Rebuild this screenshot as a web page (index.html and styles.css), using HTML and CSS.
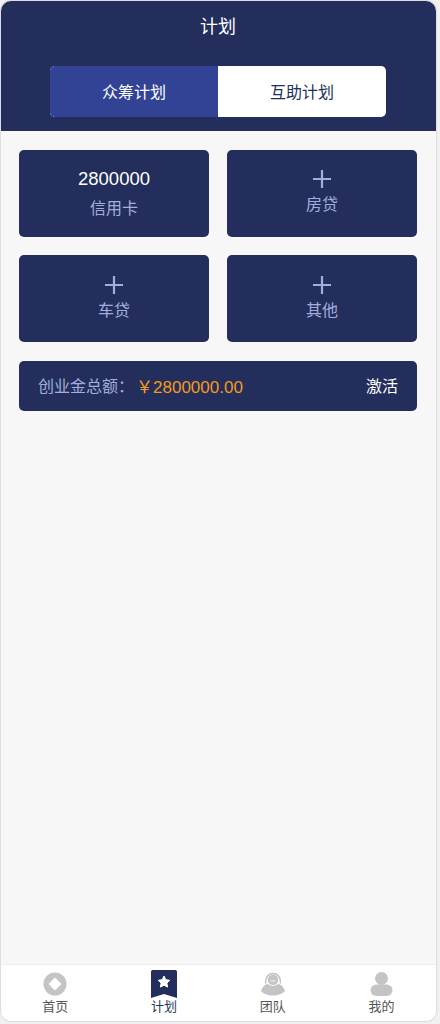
FILE: index.html
```html
<!DOCTYPE html>
<html lang="zh">
<head>
<meta charset="utf-8">
<title>计划</title>
<link rel="stylesheet" href="styles.css">
</head>
<body>
<div class="app">
  <header class="top">
    <h1 class="title">计划</h1>
    <div class="tabs">
      <div class="tab active">众筹计划</div>
      <div class="tab">互助计划</div>
    </div>
  </header>
  <main class="main">
    <div class="grid">
      <div class="card">
        <div class="amount">2800000</div>
        <div class="label label-amount">信用卡</div>
      </div>
      <div class="card">
        <svg class="plus" viewBox="0 0 18 18"><path d="M9 0v18M0 9h18"/></svg>
        <div class="label">房贷</div>
      </div>
      <div class="card">
        <svg class="plus" viewBox="0 0 18 18"><path d="M9 0v18M0 9h18"/></svg>
        <div class="label">车贷</div>
      </div>
      <div class="card">
        <svg class="plus" viewBox="0 0 18 18"><path d="M9 0v18M0 9h18"/></svg>
        <div class="label">其他</div>
      </div>
    </div>
    <div class="total">
      <span class="total-label">创业金总额：</span>
      <span class="total-value">￥2800000.00</span>
      <span class="activate">激活</span>
    </div>
  </main>
  <nav class="nav">
    <div class="nav-item">
      <svg class="nav-icon" viewBox="0 0 24 24"><circle cx="12" cy="12" r="11.500" fill="#c4c4c4"/><path d="M12 6.500 17.500 12 12 17.500 6.500 12Z" fill="#fff" stroke="#fff" stroke-linejoin="round" stroke-width="1.500"/></svg>
      <span>首页</span>
    </div>
    <div class="nav-item current">
      <svg class="nav-icon" viewBox="0 0 28 28"><path d="M2.500 0h23A1.500 1.500 0 0 1 27 1.500V28L14 24 1 28V1.500A1.500 1.500 0 0 1 2.500 0Z" fill="#232e5c"/><path d="M14 6l1.800 3.700 4 .6-2.900 2.800.7 4-3.600-1.900-3.600 1.900.7-4-2.900-2.800 4-.6Z" fill="#fff" stroke="#fff" stroke-width="1" stroke-linejoin="round"/></svg>
      <span>计划</span>
    </div>
    <div class="nav-item">
      <svg class="nav-icon" viewBox="0 0 25 24"><path d="M4.800 11.500C4 6 7 1 12.500 1S21 6 20.200 11.500" fill="none" stroke="#c4c4c4" stroke-width="1.600"/><circle cx="12.500" cy="7.500" r="5.500" fill="#c4c4c4"/><path d="M9.800 8.200c1.700 1 3.700 1 5.400 0" fill="none" stroke="#fff" stroke-width=".9"/><path d="M0 19.500C1 15.500 4 12.800 7 11.800c1.500 1.500 3.500 2.200 5.500 2.200s4-.7 5.500-2.200c3 1 6 3.700 7 7.700C22.500 22 17.500 24 12.500 24S2.500 22 0 19.500Z" fill="#c4c4c4"/></svg>
      <span>团队</span>
    </div>
    <div class="nav-item">
      <svg class="nav-icon" viewBox="0 0 24 24"><circle cx="11.500" cy="6.500" r="6.500" fill="#c4c4c4"/><rect x="0.500" y="12.500" width="22" height="11.500" rx="5.750" fill="#c4c4c4"/></svg>
      <span>我的</span>
    </div>
  </nav>
</div>
</body>
</html>
```

FILE: styles.css
```css
* { box-sizing: border-box; }
html, body { margin: 0; height: 100%; }
body {
  background: #f1f1f2;
  font-family: "PingFang SC", "Liberation Sans", "Noto Sans CJK SC", sans-serif;
}
.app {
  width: 435px;
  height: 1019.5px;
  margin: 1px 0 0 1px;
  border-radius: 10px;
  overflow: hidden;
  background: #f7f7f7;
  box-shadow: 0 0 1px 1px #dcdcdf;
  display: flex;
  flex-direction: column;
}
.top {
  height: 129.5px;
  background: #232e5c;
  display: flex;
  flex-direction: column;
  align-items: center;
}
.title {
  margin: 0 1px 0 0;
  height: 64.5px;
  padding-top: 14px;
  font-size: 18px;
  line-height: 25px;
  font-weight: 400;
  color: #fff;
}
.tabs {
  width: 336px;
  height: 51.5px;
  margin-right: 1px;
  border-radius: 5px;
  overflow: hidden;
  display: flex;
  background: #fff;
}
.tab {
  flex: 1;
  display: flex;
  align-items: center;
  justify-content: center;
  font-size: 16px;
  color: #232e5c;
}
.tab.active { background: #324396; color: #fff; }
.main {
  flex: 1;
  padding: 19px 18px 0;
}
.grid {
  display: grid;
  grid-template-columns: 190px 190px;
  grid-auto-rows: 87px;
  gap: 18.5px 18px;
}
.card {
  background: #232e5c;
  border-radius: 5px;
  display: flex;
  flex-direction: column;
  align-items: center;
  padding-top: 20.5px;
}
.plus {
  width: 18px;
  height: 18px;
  fill: none;
  stroke: #a3aede;
  stroke-width: 2.2;
}
.amount {
  font-size: 18.5px;
  line-height: 18px;
  color: #fff;
}
.label {
  margin-top: 6px;
  font-size: 16px;
  line-height: 22px;
  color: #a3aede;
}
.label-amount { margin-top: 10px; }
.total {
  margin-top: 18.5px;
  width: 398px;
  height: 50px;
  padding: 0 19px 1px;
  background: #232e5c;
  border-radius: 5px;
  display: flex;
  align-items: center;
  font-size: 16px;
}
.total-label { color: #a3aede; }
.total-value { color: #f39a1b; flex: 1; font-size: 17px; margin-left: 2px; }
.activate { color: #fff; }
.nav {
  height: 56.5px;
  background: #fff;
  border-top: 1px solid #ececec;
  display: flex;
}
.nav-item {
  flex: 1;
  display: flex;
  flex-direction: column;
  align-items: center;
  padding-top: 7px;
  font-size: 13px;
  line-height: 18px;
  color: #555;
}
.nav-item.current { padding-top: 5px; color: #233a5c; }
.nav-icon { width: 24px; height: 24px; margin-bottom: 2px; }
.current .nav-icon { width: 28px; height: 28px; margin-bottom: 0; }
```
